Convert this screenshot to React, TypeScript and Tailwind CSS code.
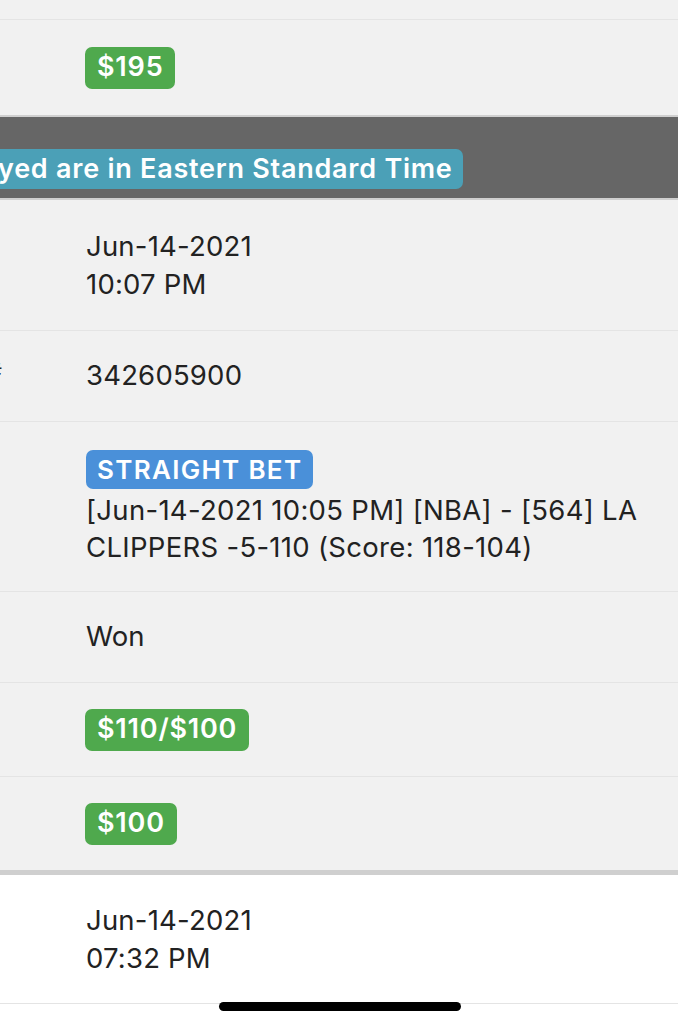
import React from "react";

const Badge = ({ children, color }: { children: React.ReactNode; color: string }) => (
  <span className={`inline-flex items-center rounded-[7px] px-[12px] h-[42px] text-[27px] font-semibold text-white tracking-[0.8px] ${color}`}>
    {children}
  </span>
);

export default function App() {
  return (
    <div className="w-[678px] h-[1023px] overflow-hidden bg-[#f1f1f1] text-[#222] relative" style={{ fontFamily: "Inter, 'Noto Sans', sans-serif" }}>
      <div className="h-[20px] border-b border-[#e4e4e4]" />
      <div className="h-[97px] flex items-center pl-[85px] border-b-[2px] border-[#d0d0d0]">
        <Badge color="bg-[#4fa94d]">$195</Badge>
      </div>
      <div className="h-[83px] bg-[#666666] flex items-end pb-[9px] border-b-[2px] border-[#cfcfcf]">
        <span className="h-[40px] flex items-center bg-[#4ba0b7] rounded-r-[7px] pr-[10px] -ml-[2px] text-white font-semibold text-[27px] tracking-[0.75px] whitespace-nowrap">
          yed are in Eastern Standard Time
        </span>
      </div>
      <div className="h-[131px] flex items-center pl-[86px] border-b border-[#e4e4e4] text-[27.5px] leading-[38px] tracking-[0.2px]">
        <div>
          <div>Jun-14-2021</div>
          <div>10:07 PM</div>
        </div>
      </div>
      <div className="h-[91px] flex items-center border-b border-[#e4e4e4] text-[27.5px] tracking-[0.2px]">
        <span className="-ml-[12px] w-[98px] text-[22px] -mt-[10px]">#</span>
        <span>342605900</span>
      </div>
      <div className="h-[170px] flex items-center pl-[86px] border-b border-[#e4e4e4]">
        <div className="pt-[2px]">
          <span className="inline-flex items-center rounded-[7px] px-[11px] h-[39px] text-[26px] font-semibold tracking-[1.3px] text-white bg-[#4a90d9]">STRAIGHT BET</span>
          <div className="text-[27.5px] leading-[37px] mt-[3px] pr-[20px] tracking-[0.3px]">
            [Jun-14-2021 10:05 PM] [NBA] - [564] LA CLIPPERS -5-110 (Score: 118-104)
          </div>
        </div>
      </div>
      <div className="h-[91px] flex items-center pl-[86px] border-b border-[#e4e4e4] text-[27.5px]">
        <span>Won</span>
      </div>
      <div className="h-[94px] flex items-center pl-[85px] border-b border-[#e4e4e4]">
        <Badge color="bg-[#4fa94d]">$110/$100</Badge>
      </div>
      <div className="h-[93px] flex items-center pl-[85px]">
        <Badge color="bg-[#4fa94d]">$100</Badge>
      </div>
      <div className="h-[5px] bg-[#cfcfcf]" />
      <div className="h-[129px] bg-white flex items-center pl-[86px] border-b border-[#e4e4e4] text-[27.5px] leading-[38px] tracking-[0.2px]">
        <div>
          <div>Jun-14-2021</div>
          <div>07:32 PM</div>
        </div>
      </div>
      <div className="h-[20px] bg-white" />
      <div className="absolute left-[219px] top-[1002px] w-[242px] h-[9px] rounded-full bg-black" />
    </div>
  );
}
